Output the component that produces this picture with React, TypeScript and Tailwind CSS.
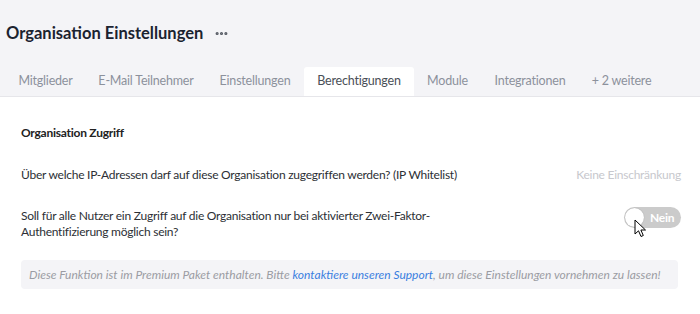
import { MoreHorizontal } from "lucide-react";

const tabs = [
  { label: "Mitglieder", w: "w-[81px]" },
  { label: "E-Mail Teilnehmer", w: "w-[120px]" },
  { label: "Einstellungen", w: "w-[98px]" },
  { label: "Berechtigungen", w: "w-[110px]" },
  { label: "Module", w: "w-[67px]" },
  { label: "Integrationen", w: "w-[98px]" },
  { label: "+ 2 weitere", w: "w-[85px]" },
];

function Cursor() {
  return (
    <svg width="14" height="20" viewBox="0 0 14 20" className="absolute left-[10px] top-[12px]">
      <path
        d="M1 1 L1 15 L4.5 11.8 L7 17.5 L9.3 16.5 L6.9 11 L11.5 11 Z"
        fill="#fff"
        stroke="#000"
        strokeWidth="1"
        strokeLinejoin="round"
      />
    </svg>
  );
}

function Toggle() {
  return (
    <div className="relative -mt-[1px]">
      <div className="flex h-[21px] w-[57px] items-center rounded-full bg-[#cbcbcb] pl-[1px]">
        <div className="h-[19px] w-[19px] rounded-full bg-white shadow-[0_0_1px_rgba(0,0,0,0.3)]"></div>
        <span className="ml-[6px] text-[12px] font-bold text-white">Nein</span>
      </div>
      <Cursor />
    </div>
  );
}

export default function App() {
  return (
    <div className="h-[314px] w-[700px] overflow-hidden bg-white font-['Lato',sans-serif]">
      {/* Header */}
      <div className="border-b border-[#e6e6ea] bg-[#f4f4f7] pt-[20px]">
        <div className="flex h-[26px] items-center gap-[11px] px-[6px]">
          <h1 className="text-[16.5px] font-bold text-[#1b2330]">Organisation Einstellungen</h1>
          <MoreHorizontal size={15} strokeWidth={3} className="text-[#555a63]" />
        </div>
        <div className="mt-[21px] flex pl-[5px]">
          {tabs.map((t) => (
            <div
              key={t.label}
              className={`flex h-[29px] items-center justify-center whitespace-nowrap text-[12.5px] tracking-[-0.2px] ${t.w} ${
                t.label === "Berechtigungen"
                  ? "rounded-t-[3px] bg-white text-[#4a4f57]"
                  : "text-[#8c919c]"
              }`}
            >
              {t.label}
            </div>
          ))}
        </div>
      </div>

      {/* Content */}
      <div className="pl-[21px] pr-[19px] pt-[28px] text-[12px] leading-[16px] tracking-[-0.25px] text-[#2c2f35]">
        <h2 className="font-bold text-[#222]">Organisation Zugriff</h2>

        <div className="mt-[26px] flex items-center justify-between">
          <span>Über welche IP-Adressen darf auf diese Organisation zugegriffen werden? (IP Whitelist)</span>
          <span className="text-[#c7c8cd]">Keine Einschränkung</span>
        </div>

        <div className="mt-[25px] flex items-start justify-between">
          <p className="w-[440px]">
            Soll für alle Nutzer ein Zugriff auf die Organisation nur bei aktivierter Zwei-Faktor-Authentifizierung möglich sein?
          </p>
          <Toggle />
        </div>

        <div className="mt-[20px] mr-[3px] flex h-[29px] items-center whitespace-nowrap rounded-[4px] bg-[#f4f4f7] px-[8px] italic tracking-normal text-[#9b9ca3]">
          <span>
            Diese Funktion ist im Premium Paket enthalten. Bitte{" "}
            <span className="text-[#3b7fe0]">kontaktiere unseren Support</span>, um diese Einstellungen vornehmen zu lassen!
          </span>
        </div>
      </div>
    </div>
  );
}
